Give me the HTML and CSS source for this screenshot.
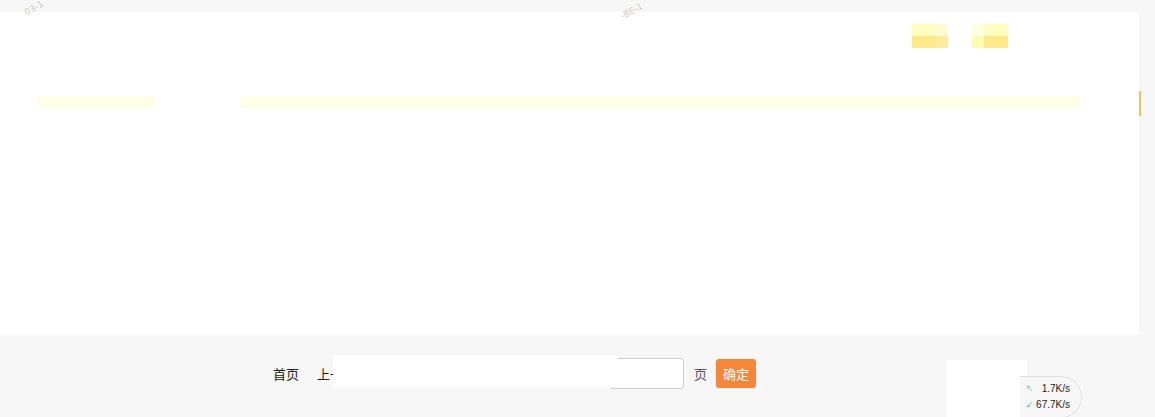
FILE: index.html
```html
<!DOCTYPE html>
<html lang="zh-CN">
<head>
  <meta charset="UTF-8" />
  <title>列表</title>
  <link rel="stylesheet" href="styles.css">
</head>
<body>
  <!-- faint watermark along the top edge -->
  <div class="watermark wm-1">03-1</div>
  <div class="watermark wm-2">-BE-1</div>

  <div class="panel">
    <div class="panel-top">
      <div class="chip">
        <span class="c c1"></span><span class="c c2"></span>
        <span class="c c3"></span><span class="c c4"></span>
      </div>
      <div class="chip chip-b">
        <span class="c c5"></span><span class="c c1"></span>
        <span class="c c6"></span><span class="c c3"></span>
      </div>
    </div>
    <div class="row-bars">
      <div class="bar bar-short"></div>
      <div class="bar bar-long"></div>
    </div>
  </div>
  <div class="edge-mark"></div>

  <div class="pager">
    <span class="pg-link">首页</span>
    <span class="pg-link">上一页</span>
    <span class="pg-spacer"></span>
    <input class="pg-input" type="text">
    <span class="pg-unit">页</span>
    <button class="pg-btn">确定</button>
  </div>

  <!-- blanked areas over the page -->
  <div class="mask mask-pager"></div>
  <div class="mask mask-corner"></div>

  <div class="speed">
    <div class="speed-line"><span class="arrow up">↖</span>1.7K/s</div>
    <div class="speed-line"><span class="arrow down">↙</span>67.7K/s</div>
  </div>
</body>
</html>
```

FILE: styles.css
```css
* {
  margin: 0;
  padding: 0;
  box-sizing: border-box;
}

body {
  font-family: "Noto Sans CJK SC", "Liberation Sans", sans-serif;
  background: #f7f7f7;
  width: 1155px;
  height: 417px;
  overflow: hidden;
  position: relative;
  padding-top: 12px;
}

.watermark {
  position: absolute;
  font-family: "DejaVu Sans", sans-serif;
  font-size: 9px;
  line-height: 9px;
  color: #d0d0d0;
  transform: rotate(-28deg);
  white-space: nowrap;
}

.wm-1 { left: 24px; top: 4px; }
.wm-2 { left: 620px; top: 7px; }

.panel {
  background: #fff;
  width: 1139px;
  height: 323px;
  padding-top: 12px;
}

.panel-top {
  display: flex;
  gap: 24px;
  padding-left: 912px;
}

.chip {
  display: grid;
  grid-template-columns: 24px 12px;
  grid-template-rows: 12px 12px;
}

.chip-b {
  grid-template-columns: 12px 24px;
}

.c1 { background: #fffdc0; }
.c2 { background: #fffad2; }
.c3 { background: #ffe98a; }
.c4 { background: #ffeb9c; }
.c5 { background: #fffde2; }
.c6 { background: #fffbb2; }

.row-bars {
  display: flex;
  margin-top: 48px;
  padding-left: 37px;
  gap: 85px;
}

.bar {
  height: 12px;
  background: #fffee6;
}

.bar-short { width: 118px; }
.bar-long { width: 840px; }

.edge-mark {
  position: absolute;
  left: 1139px;
  top: 91px;
  width: 2px;
  height: 25px;
  background: #f2c25a;
}

.pager {
  display: flex;
  align-items: center;
  height: 76px;
  padding-left: 273px;
  font-size: 13px;
  color: #222;
}

.pg-link {
  margin-right: 18px;
}

.pg-spacer {
  width: 236px;
}

.pg-input {
  width: 74px;
  height: 31px;
  border: 1px solid #cfcfcf;
  border-radius: 3px;
  background: #fff;
}

.pg-unit {
  color: #555;
  margin: 0 9px 0 10px;
}

.pg-btn {
  width: 40px;
  height: 29px;
  border: none;
  border-radius: 3px;
  background: #f6863a;
  color: #fff;
  font-family: inherit;
  font-size: 13px;
}

.mask {
  position: absolute;
  background: #fff;
}

.mask-pager {
  left: 333px;
  top: 355px;
  width: 285px;
  height: 32px;
}

.mask-corner {
  left: 946px;
  top: 360px;
  width: 81px;
  height: 57px;
}

.speed {
  position: absolute;
  left: 1020px;
  top: 376px;
  width: 62px;
  height: 42px;
  background: #f7f7f7;
  border: 1px solid #e2e2e2;
  border-left: none;
  border-radius: 0 21px 21px 0;
  padding-top: 4px;
  font-family: "Liberation Sans", sans-serif;
  font-size: 10px;
  color: #222;
}

.speed-line {
  display: flex;
  justify-content: flex-end;
  padding-right: 11px;
  line-height: 16px;
  position: relative;
}

.arrow {
  position: absolute;
  left: 6px;
  font-size: 7px;
  color: #4a9;
}
```
